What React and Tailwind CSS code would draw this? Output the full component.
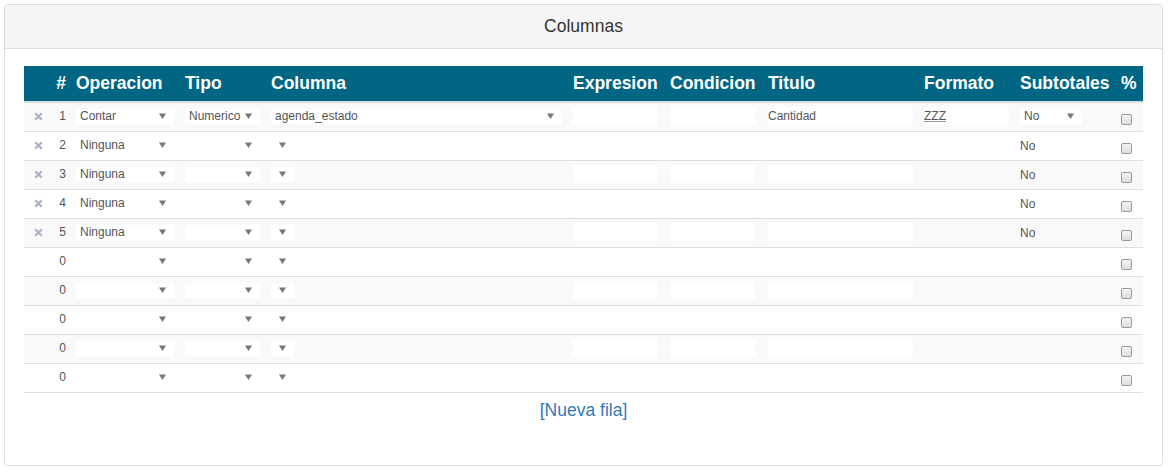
const cols = [
  { key: 'x', label: '', w: 'w-[28px]' },
  { key: 'n', label: '#', w: 'w-[24px]' },
  { key: 'op', label: 'Operacion', w: 'w-[109px]' },
  { key: 'tipo', label: 'Tipo', w: 'w-[86px]' },
  { key: 'col', label: 'Columna', w: 'w-[302px]' },
  { key: 'expr', label: 'Expresion', w: 'w-[97px]' },
  { key: 'cond', label: 'Condicion', w: 'w-[98px]' },
  { key: 'tit', label: 'Titulo', w: 'w-[156px]' },
  { key: 'fmt', label: 'Formato', w: 'w-[96px]' },
  { key: 'sub', label: 'Subtotales', w: 'w-[101px]' },
  { key: 'pct', label: '%', w: 'w-[22px]' },
];

const rows = [
  { n: 1, del: true, op: 'Contar', tipo: 'Numerico', col: 'agenda_estado', wide: true, tit: 'Cantidad', fmt: 'ZZZ', sub: 'select' },
  { n: 2, del: true, op: 'Ninguna', sub: 'No' },
  { n: 3, del: true, op: 'Ninguna', sub: 'No' },
  { n: 4, del: true, op: 'Ninguna', sub: 'No' },
  { n: 5, del: true, op: 'Ninguna', sub: 'No' },
  { n: 0 },
  { n: 0 },
  { n: 0 },
  { n: 0 },
  { n: 0 },
];

function Arrow() {
  return (
    <svg width="7" height="6" viewBox="0 0 7 6" className="shrink-0">
      <path d="M0 0.5 L7 0.5 L3.5 6 Z" fill="#777" />
    </svg>
  );
}

function Select({ value, width }) {
  return (
    <div className={`${width} h-[15px] bg-white flex items-center justify-between pl-[4px] pr-[8px]`}>
      <span className="text-[12px] text-[#555] leading-none whitespace-nowrap">{value}</span>
      <Arrow />
    </div>
  );
}

function Input({ value, width, underline }) {
  return (
    <div className={`${width} h-[18px] bg-white flex items-center`}>
      <span className={`text-[12px] text-[#555] leading-none ${underline ? 'underline decoration-[#999]' : ''}`}>{value}</span>
    </div>
  );
}

function Row({ r, striped }) {
  return (
    <div className={`flex items-center h-[29px] pb-[2px] border-b border-[#ddd] ${striped ? 'bg-[#f9f9f9]' : 'bg-white'}`}>
      <div className="w-[28px] flex justify-center">
        {r.del && (
          <svg width="9" height="9" viewBox="0 0 9 9">
            <path d="M1.2 1.2 L7.8 7.8 M7.8 1.2 L1.2 7.8" stroke="#a9b1c4" strokeWidth="2.2" />
          </svg>
        )}
      </div>
      <div className="w-[24px] text-right pr-[10px] text-[12px] text-[#555]">{r.n}</div>
      <div className="w-[109px]"><Select value={r.op} width="w-[98px]" /></div>
      <div className="w-[86px]"><Select value={r.tipo} width="w-[75px]" /></div>
      <div className="w-[302px]"><Select value={r.col} width={r.wide ? 'w-[291px]' : 'w-[23px]'} /></div>
      <div className="w-[97px]"><Input width="w-[85px]" /></div>
      <div className="w-[98px]"><Input width="w-[85px]" /></div>
      <div className="w-[156px]"><Input value={r.tit} width="w-[145px]" /></div>
      <div className="w-[96px]">
        {r.fmt && <Input value={r.fmt} width="w-[85px]" underline />}
      </div>
      <div className="w-[101px]">
        {r.sub === 'select' && <Select value="No" width="w-[62px]" />}
        {r.sub === 'No' && <span className="text-[12px] text-[#555]">No</span>}
      </div>
      <div className="w-[22px] flex pt-[6px]">
        <div className="w-[11px] h-[11px] rounded-[2px] border border-[#9a9a9a] bg-gradient-to-b from-[#f4f4f4] to-[#dedede]" />
      </div>
    </div>
  );
}

export default function App() {
  return (
    <div className="p-[4px] pr-[5px] bg-white" style={{ fontFamily: '"Liberation Sans", Arial, sans-serif' }}>
      <div className="border border-[#ddd] rounded-[4px] bg-white">
        <div className="h-[44px] bg-[#f5f5f5] border-b border-[#ddd] rounded-t-[4px] flex items-center justify-center">
          <span className="text-[17.5px] text-[#333]">Columnas</span>
        </div>
        <div className="px-[19px] pt-[17px] pb-[45px]">
          <div className="flex items-center h-[35px] bg-[#006683] border-b-2 border-[#ddd] box-content">
            {cols.map((c) => (
              <div
                key={c.key}
                className={`${c.w} text-white font-bold text-[17.5px] whitespace-nowrap ${c.key === 'n' ? 'text-right pr-[10px]' : ''}`}
              >
                {c.label}
              </div>
            ))}
          </div>
          {rows.map((r, i) => (
            <Row key={i} r={r} striped={i % 2 === 0} />
          ))}
          <div className="text-center mt-[7px] text-[17.5px] text-[#337ab7] leading-[20px]">[Nueva fila]</div>
        </div>
      </div>
    </div>
  );
}
